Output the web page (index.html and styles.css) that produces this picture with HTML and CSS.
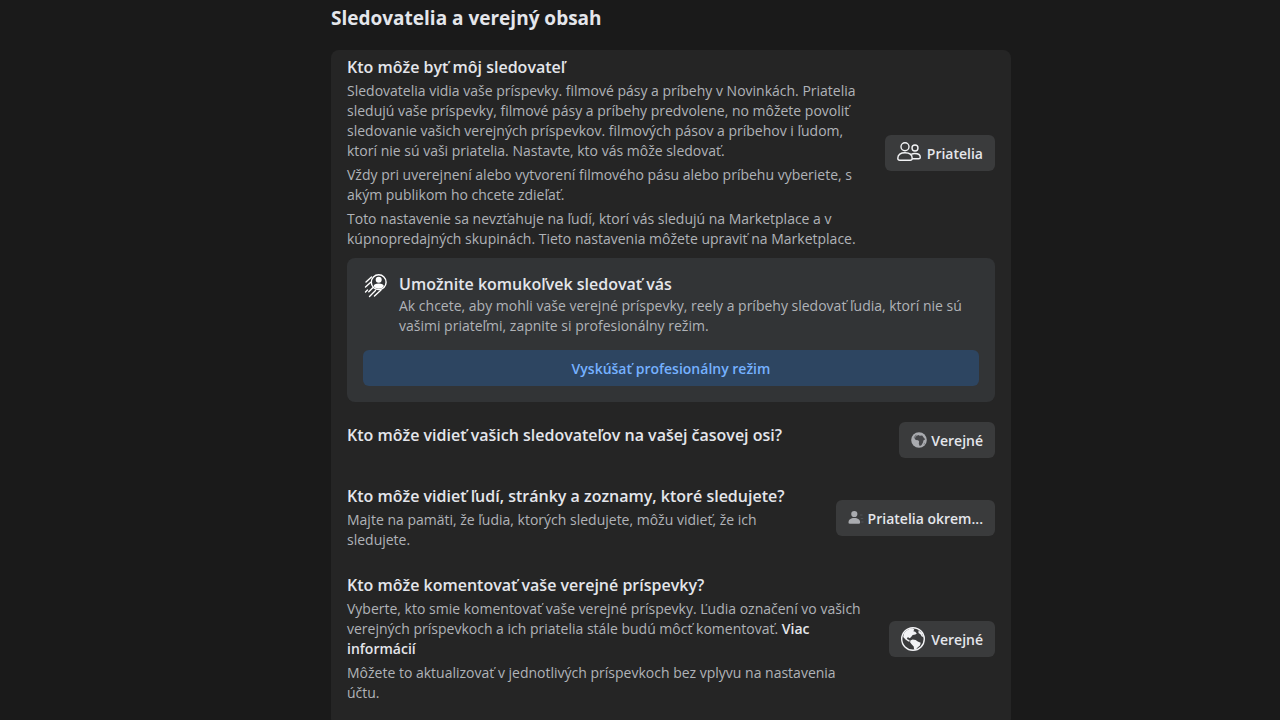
FILE: index.html
```
<!DOCTYPE html>
<html lang="sk">
<head>
  <meta charset="UTF-8" />
  <meta name="viewport" content="width=device-width, initial-scale=1.0" />
  <title>Sledovatelia a verejný obsah</title>
  <link rel="stylesheet" href="styles.css">
</head>
<body>
  <main class="container">
    <h1>Sledovatelia a verejný obsah</h1>
    <div class="card">

      <section class="setting">
        <div class="setting-text">
          <h2>Kto môže byť môj sledovateľ</h2>
          <p>Sledovatelia vidia vaše príspevky. filmové pásy a príbehy v Novinkách. Priatelia sledujú vaše príspevky, filmové pásy a príbehy predvolene, no môžete povoliť sledovanie vašich verejných príspevkov. filmových pásov a príbehov i ľudom, ktorí nie sú vaši priatelia. Nastavte, kto vás môže sledovať.</p>
          <p>Vždy pri uverejnení alebo vytvorení filmového pásu alebo príbehu vyberiete, s akým publikom ho chcete zdieľať.</p>
          <p>Toto nastavenie sa nevzťahuje na ľudí, ktorí vás sledujú na Marketplace a v kúpnopredajných skupinách. Tieto nastavenia môžete upraviť na Marketplace.</p>
        </div>
        <button type="button" class="audience audience-large">
          <svg width="24" height="24" viewBox="0 0 24 24" fill="none" stroke="#f2f3f5" stroke-width="1.4" aria-hidden="true">
            <circle cx="8" cy="5.800" r="4" />
            <circle cx="18" cy="7" r="3" />
            <path d="M.8 17.300c0-3.700 2.800-5.500 7.200-5.500s7.200 1.800 7.200 5.500c0 1.400-.6 2-2 2H2.800c-1.400 0-2-.6-2-2Z" />
            <path d="M14.200 13.300c1-.5 2.200-.8 3.600-.8 3.500 0 5.500 1.500 5.500 3.700 0 1-.5 1.500-1.600 1.500h-6.500" />
          </svg>
          <span>Priatelia</span>
        </button>
      </section>

      <section class="promo">
        <div class="promo-head">
          <svg width="24" height="24" viewBox="0 0 24 24" fill="none" stroke="#fff" stroke-width="1.4" stroke-linecap="round" aria-hidden="true">
            <circle cx="15.700" cy="8.200" r="7.400" />
            <circle cx="15.700" cy="5.800" r="3" fill="#fff" stroke="none" />
            <path d="M10.600 12.200c.2-1.900 2-2.700 5.100-2.700s4.900.8 5.100 2.700c-1.200 1.700-3 2.500-5.100 2.500s-3.900-.8-5.100-2.500Z" fill="#fff" stroke="none" />
            <path d="M8.500 3 3 8M7.500 8.500 2.500 13M4.500 16l-2 2M9.800 13.800l-4 4M12.500 16.500 6.500 22.500M18 16 11.500 22" />
          </svg>
          <div class="promo-text">
            <h2>Umožnite komukoľvek sledovať vás</h2>
            <p>Ak chcete, aby mohli vaše verejné príspevky, reely a príbehy sledovať ľudia, ktorí nie sú vašimi priateľmi, zapnite si profesionálny režim.</p>
          </div>
        </div>
        <button type="button" class="promo-button">Vyskúšať profesionálny režim</button>
      </section>

      <section class="setting setting-single">
        <div class="setting-text">
          <h2>Kto môže vidieť vašich sledovateľov na vašej časovej osi?</h2>
        </div>
        <button type="button" class="audience">
          <svg width="16" height="16" viewBox="0 0 16 16" aria-hidden="true">
            <circle cx="8" cy="8" r="7.800" fill="#a9abaf" />
            <path d="m5.200 4.300 2-1.300 1.600.7 2.400-.2 1.600 2.300 1.400 1.400-1.800 1.300-.4 2-1.600 2.800-1.700.7-.9-2.300.3-2.200-1-1.300-2.300-.1-1.300-1.700Z" fill="#46474a" />
            <path d="M2.600 5.400 5 2.500l.8.600-2 2.800ZM12.800 11.800l1.200-1.400-.4 1.600-.8.900Z" fill="#6c6e72" />
          </svg>
          <span>Verejné</span>
        </button>
      </section>

      <section class="setting">
        <div class="setting-text">
          <h2>Kto môže vidieť ľudí, stránky a zoznamy, ktoré sledujete?</h2>
          <p>Majte na pamäti, že ľudia, ktorých sledujete, môžu vidieť, že ich sledujete.</p>
        </div>
        <button type="button" class="audience">
          <svg width="16" height="16" viewBox="0 0 16 16" fill="#a9abaf" aria-hidden="true">
            <circle cx="6.300" cy="4" r="3.100" />
            <path d="M.5 12.600C.5 9.600 2.700 8 6.300 8s5.800 1.600 5.800 4.600c0 .8-.4 1.200-1.200 1.200H1.700c-.8 0-1.200-.4-1.200-1.200Z" />
            <path d="M12 4.500h2.500v1H12zM12.700 8h2.500v1h-2.500zM13.200 11.500h2.300v1h-2.300z" fill="#505255" />
          </svg>
          <span>Priatelia okrem...</span>
        </button>
      </section>

      <section class="setting">
        <div class="setting-text">
          <h2>Kto môže komentovať vaše verejné príspevky?</h2>
          <p>Vyberte, kto smie komentovať vaše verejné príspevky. Ľudia označení vo vašich verejných príspevkoch a ich priatelia stále budú môcť komentovať. <a href="#">Viac informácií</a></p>
          <p>Môžete to aktualizovať v jednotlivých príspevkoch bez vplyvu na nastavenia účtu.</p>
        </div>
        <button type="button" class="audience audience-large">
          <svg width="24" height="24" viewBox="0 0 24 24" aria-hidden="true">
            <circle cx="12" cy="12" r="11.300" fill="none" stroke="#f2f3f5" stroke-width="1.400" />
            <path d="M2.800 6.800C4.800 3.500 7.800 1.500 11.500 1.200l1.800 1.300-1 1.700 1.900.6 1.600 1.700-1.500 1-2.600.4-1.600 2-1.300 1.300-1.700-.9-1.300.8.900 1.400 1.600.6.600 1.300-1.600.2-2.800-2-2.300-2.500Z" fill="#f2f3f5" />
            <path d="m9.300 13.600 2.300-1.200 3 .5 2.200 1.600 2.900 1.300-.7 2.700-2.400 2-2 2.600-1.500-.6-.4-3-1.900-1.900-1.600-2Z" fill="#f2f3f5" />
            <path d="m17.500 3.200 3.300 2.800 1.700 4-1.700-.5-1.400-2.300-1.900-1.200Z" fill="#f2f3f5" />
          </svg>
          <span>Verejné</span>
        </button>
      </section>

    </div>
  </main>
</body>
</html>
```

FILE: styles.css
```
* {
  box-sizing: border-box;
}
body {
  margin: 0;
  padding-left: 62px;
  background: #1a1a1a;
  color: #e4e6eb;
  font-family: "Segoe UI", "Open Sans", "Noto Sans", sans-serif;
  font-size: 14px;
  line-height: 20px;
}
.container {
  max-width: 680px;
  margin: 0 auto;
  padding-top: 6px;
}
h1, h2, p {
  margin: 0;
}
h1 {
  font-size: 19px;
  font-weight: 700;
  line-height: 24px;
}
h2 {
  font-size: 16px;
  font-weight: 600;
  line-height: 20px;
}
p {
  color: #b0b3b8;
}
p a {
  color: #e4e6eb;
  font-weight: 600;
  text-decoration: none;
}
.card {
  margin-top: 20px;
  padding: 7px 16px 24px;
  background: #252525;
  border-radius: 8px;
}
.setting {
  display: flex;
  align-items: center;
  justify-content: space-between;
  gap: 20px;
}
.setting + .setting {
  margin-top: 25px;
}
.setting-text {
  display: flex;
  flex-direction: column;
  gap: 4px;
}
.setting-single {
  padding-bottom: 3px;
}
.setting-single .setting-text {
  padding-bottom: 10px;
}
button {
  height: 36px;
  border: none;
  border-radius: 6px;
  font-family: inherit;
  font-size: 14px;
  font-weight: 600;
  cursor: pointer;
}
.audience {
  display: flex;
  flex-shrink: 0;
  align-items: center;
  gap: 4px;
  padding: 0 12px;
  background: #3a3b3c;
  color: #e4e6eb;
}
.audience-large {
  gap: 6px;
}

.promo {
  margin: 9px 0 20px;
  padding: 16px;
  background: #323436;
  border-radius: 8px;
}
.promo-head {
  display: flex;
  gap: 12px;
}
.promo-head svg {
  flex-shrink: 0;
}
.promo-text {
  display: flex;
  flex-direction: column;
  gap: 2px;
}
.promo-button {
  width: 100%;
  margin-top: 14px;
  background: #2d4561;
  color: #75b1ff;
}

@media (max-width: 760px) {
  body {
    padding: 0 12px;
  }
  .setting {
    align-items: flex-start;
  }
}
```
